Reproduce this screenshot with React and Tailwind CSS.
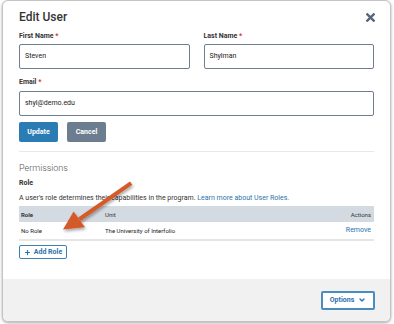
import { Plus, ChevronDown } from 'lucide-react'

function Field({ label, value, className = '' }) {
  return (
    <div className={className}>
      <div className="mb-[3px] text-[7px] font-bold leading-[10px] text-[#333]">
        {label} <span className="text-[#d0392b]">*</span>
      </div>
      <div className="flex h-[25px] items-center rounded-[2px] border border-[#6f7f8f] px-[5px] text-[7px] text-[#222]">
        {value}
      </div>
    </div>
  )
}

function Arrow() {
  return (
    <svg className="pointer-events-none absolute left-0 top-0" width="394" height="324" viewBox="0 0 394 324">
      <defs>
        <filter id="sh" x="-20%" y="-20%" width="140%" height="140%">
          <feDropShadow dx="1" dy="2" stdDeviation="1.5" floodColor="#000" floodOpacity="0.35" />
        </filter>
      </defs>
      <g filter="url(#sh)" fill="#d55a2b">
        <path d="M130 181.5 L132.3 184.8 L80.5 221 L78.2 217.6 Z" />
        <path d="M63 229.5 L73.6 211.5 L85 227.3 Z" />
      </g>
    </svg>
  )
}

export default function App() {
  return (
    <div className="relative h-[324px] w-[394px] overflow-hidden bg-white font-['Roboto',sans-serif]">
      <div className="ml-[2px] flex h-[322px] w-[389px] flex-col overflow-hidden rounded-[6px] border border-[#c4c4c4] bg-white shadow-[0_1px_3px_rgba(0,0,0,0.35)]">
        <div className="flex-1 px-[16px] pt-[8px]">
          <div className="flex items-center justify-between">
            <h2 className="text-[12px] font-medium leading-[16px] text-[#333]">Edit User</h2>
            <svg width="9" height="9" viewBox="0 0 10 10" className="mr-[-1px]">
              <path d="M1.5 1.5 L8.5 8.5 M8.5 1.5 L1.5 8.5" stroke="#56677a" strokeWidth="2.6" strokeLinecap="square" />
            </svg>
          </div>
          <div className="mt-[6px] flex gap-[14px]">
            <Field label="First Name" value="Steven" className="flex-1" />
            <Field label="Last Name" value="Shylman" className="flex-1" />
          </div>
          <Field label="Email" value="shyl@demo.edu" className="mt-[8px] [&>div:first-child]:mb-[4px]" />
          <div className="mt-[6px] flex gap-[9px]">
            <button className="h-[20px] w-[39px] rounded-[2px] bg-[#2b7bb5] text-[7px] font-bold text-white">Update</button>
            <button className="h-[20px] w-[39px] rounded-[2px] bg-[#6b7d8e] text-[7px] font-bold text-white">Cancel</button>
          </div>
          <div className="mt-[9px] h-px bg-[#e8e8e8]" />
          <div className="mt-[10px] text-[9px] font-light leading-[12px] text-[#555]">Permissions</div>
          <div className="mt-[4px] text-[7px] font-bold leading-[10px] text-[#333]">Role</div>
          <p className="mt-[5px] text-[7px] leading-[10px] text-[#333]">
            A user's role determines their capabilities in the program.{' '}
            <span className="text-[#2a72ad]">Learn more about User Roles.</span>
          </p>
          <div className="mt-[3px] text-[6px]">
            <div className="flex h-[16px] items-center bg-[#d3dae1] px-[2px] text-[#333]">
              <span className="w-[84px] font-bold">Role</span>
              <span className="flex-1">Unit</span>
              <span className="pr-[1px]">Actions</span>
            </div>
            <div className="flex h-[19px] items-center border-b-2 border-[#e6e6e6] px-[2px] text-[#222]">
              <span className="w-[84px]">No Role</span>
              <span className="flex-1">The University of Interfolio</span>
              <span className="pr-[1px] text-[7px] text-[#2a72ad]">Remove</span>
            </div>
          </div>
          <button className="mt-[4px] flex h-[14px] w-[48px] items-center justify-center gap-[3px] rounded-[2px] border border-[#3a80b3] text-[7px] font-bold text-[#2a72ad]">
            <Plus size={7} strokeWidth={4} />
            Add Role
          </button>
        </div>
        <div className="flex h-[42px] items-center justify-end bg-[#f1f1f1] px-[15px]">
          <button className="flex h-[19px] w-[54px] items-center justify-center gap-[4px] rounded-[2px] border-2 border-[#4a8cbd] bg-white text-[7px] font-bold text-[#2a72ad]">
            Options
            <ChevronDown size={8} strokeWidth={4} />
          </button>
        </div>
      </div>
      <Arrow />
    </div>
  )
}
